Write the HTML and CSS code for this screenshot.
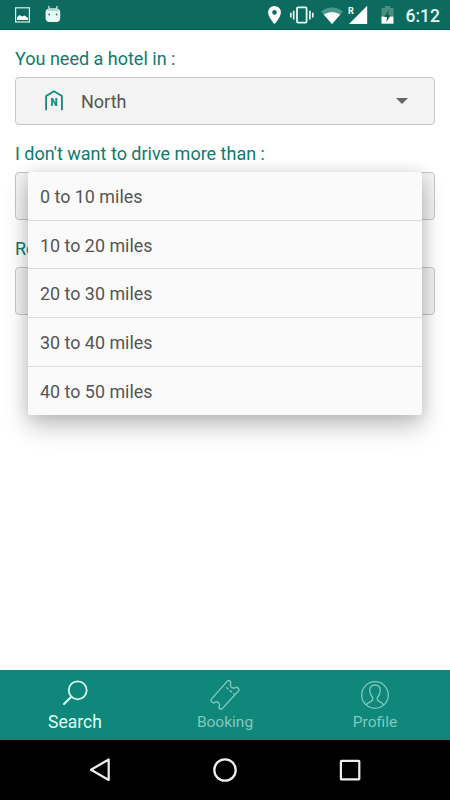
FILE: index.html
```
<!DOCTYPE html>
<html>
<head>
    <meta charset="utf-8">
    <title>Search</title>
    <link rel="stylesheet" href="styles.css">
</head>

<body>
<div class="screen">
  <header class="status-bar">
    <svg class="icon-picture" width="15" height="16" viewBox="0 0 15 16">
      <rect x="0.6" y="0.8" width="13.8" height="14.2" fill="none" stroke="#d9f3ec" stroke-width="1.2"/>
      <path d="M2 13V10.5L4.5 8L7 9.6L9.5 8.6L13 11V13Z" fill="#fff"/>
    </svg>
    <svg class="icon-android" width="16" height="18" viewBox="0 0 16 18">
      <path d="M3.5 1L4.8 4.5M12.3 1L11 4.5" stroke="#d9f3ec" stroke-width="1.1"/>
      <path d="M0.6 7.5Q0.6 3.6 4.5 3.5H11.5Q15.2 3.6 15.2 7.5V13Q15.2 17 11.5 17H4.5Q0.6 17 0.6 13Z" fill="#e6faf5"/>
      <path d="M1.3 6Q2.2 3.7 4.5 3.6H11.5Q13.8 3.7 14.5 6Z" fill="#b5d9d0"/>
      <circle cx="4.2" cy="9.5" r="0.9" fill="#2d7568"/>
      <circle cx="11.6" cy="9.5" r="0.9" fill="#2d7568"/>
    </svg>

    <div class="status-right">
      <svg class="icon-pin" width="13" height="18" viewBox="0 0 13 18">
        <path fill-rule="evenodd" d="M6.5 0A6.4 6.4 0 0 0 0.1 6.4C0.1 11 6.5 18 6.5 18S12.9 11 12.9 6.4A6.4 6.4 0 0 0 6.5 0ZM6.5 4.1A2.3 2.3 0 1 1 6.5 8.7A2.3 2.3 0 1 1 6.5 4.1Z" fill="#fff"/>
      </svg>
      <svg class="icon-vibrate" width="24" height="18" viewBox="0 0 24 18">
        <rect x="7" y="1.4" width="9.6" height="15.2" rx="1" fill="none" stroke="#e6faf5" stroke-width="1.8"/>
        <path d="M0.8 6.8V11.6M3.7 4.8V13.6M19.9 4.8V13.6M22.8 6.8V11.6" stroke="#e6faf5" stroke-width="1.7"/>
      </svg>
      <svg class="icon-wifi" width="22" height="17" viewBox="0 0 22 17">
        <path d="M0 4.6Q11 -3.8 22 4.6L11 17Z" fill="#4b978a"/>
        <path d="M2.7 7.5Q11 2.3 19.3 7.5L11 17Z" fill="#fff"/>
      </svg>
      <svg class="icon-signal" width="20" height="19" viewBox="0 0 20 19">
        <path d="M1 19L19.2 0.8V19Z" fill="#fff"/>
        <text class="roaming" x="0" y="9">R</text>
      </svg>
      <svg class="icon-battery" width="13" height="18" viewBox="0 0 13 18">
        <path d="M0.5 2H4V0H9V2H12.5V10.5H0.5Z" fill="#4b8f83"/>
        <path d="M0.5 10.5H12.5V17.7H0.5Z" fill="#fff"/>
        <path d="M7.7 4L3.2 11H6L5.5 16L9.8 9H7.2Z" fill="#0c6457"/>
      </svg>
      <span class="clock">6:12</span>
    </div>
  </header>

  <main class="form">
    <div class="label">You need a hotel in :</div>
    <div class="field">
      <svg class="icon-region" width="18" height="21" viewBox="0 0 18 21">
        <path d="M1.1 20.3V6L9 1.3L16.9 6V20.3" fill="none" stroke="#16897b" stroke-width="1.8"/>
        <text class="region-letter" x="9" y="16" text-anchor="middle">N</text>
      </svg>
      <span class="value">North</span>
      <span class="arrow"></span>
    </div>
    <div class="label">I don't want to drive more than :</div>
    <div class="field"></div>
    <div class="label">Ro</div>
    <div class="field"></div>

    <ul class="dropdown">
      <li>0 to 10 miles</li>
      <li>10 to 20 miles</li>
      <li>20 to 30 miles</li>
      <li>30 to 40 miles</li>
      <li>40 to 50 miles</li>
    </ul>
  </main>

  <nav class="tabs">
    <a class="tab active">
      <svg width="30" height="30" viewBox="0 0 30 30">
        <circle cx="17.7" cy="10.3" r="9" fill="none" stroke="#d5f8ef" stroke-width="1.8"/>
        <path d="M11.3 16.8L4 24" stroke="#d5f8ef" stroke-width="2.1" stroke-linecap="round"/>
      </svg>
      <span>Search</span>
    </a>
    <a class="tab">
      <svg width="30" height="30" viewBox="0 0 30 30">
        <g fill="none" stroke="#82c7bc" stroke-width="1.4" stroke-linejoin="round">
          <path d="M17.2 1.4Q18.7 -0.1 20 1.1Q21.2 2.3 20.5 3.7Q19.7 5.7 21.4 7.2Q23.3 8.7 25.3 7.6Q26.8 6.7 28 8Q29.7 9.6 28.4 11L12.2 28.6Q10.8 30 9.5 28.7Q8.4 27.5 9.3 26.1Q10.2 24.2 8.5 22.7Q6.9 21.2 5 22.3Q3.4 23.3 2 22Q0.2 20.4 1.6 18.9Z"/>
          <path d="M16.2 7.2L24.3 14.2" stroke-dasharray="3 1.6"/>
        </g>
      </svg>
      <span>Booking</span>
    </a>
    <a class="tab">
      <svg width="30" height="30" viewBox="0 0 30 30">
        <g fill="none" stroke="#82c7bc" stroke-width="1.3">
          <circle cx="15" cy="15" r="13.3"/>
          <path d="M6.2 25Q7 23 11 21.3Q13.2 20.4 12.7 17.7Q10 14.9 9.8 11Q9.5 5 15 5T20.2 11Q20 14.9 17.3 17.7Q16.8 20.4 19 21.3Q23 23 23.8 25"/>
        </g>
      </svg>
      <span>Profile</span>
    </a>
  </nav>

  <footer class="nav-bar">
    <svg width="24" height="26" viewBox="0 0 24 26">
      <path d="M20.7 2.5V23L3 12.8Z" fill="none" stroke="#eee" stroke-width="2.2" stroke-linejoin="round"/>
    </svg>
    <svg width="24" height="26" viewBox="0 0 24 26">
      <circle cx="12" cy="13" r="10.7" fill="none" stroke="#eee" stroke-width="2.3"/>
    </svg>
    <svg width="24" height="26" viewBox="0 0 24 26">
      <rect x="2.9" y="3.9" width="18.4" height="18.4" rx="0.6" fill="none" stroke="#eee" stroke-width="2.2"/>
    </svg>
  </footer>
</div>
</body>
</html>
```
FILE: styles.css
```
html, body {
  height: 100%;
  margin: 0;
  overflow: hidden;
}
body {
  background: #fff;
  font-family: Roboto, "Liberation Sans", sans-serif;
  font-size: 18px;
}
svg {
  display: block;
  flex: none;
}
.screen {
  display: flex;
  flex-direction: column;
  width: 450px;
  height: 800px;
}

/* status bar */
.status-bar {
  display: flex;
  align-items: center;
  box-sizing: border-box;
  height: 30px;
  padding: 0 10px 0 15px;
  background: #0c6b5e;
  border-bottom: 1px solid #075f52;
}
.icon-picture {
  margin-top: 1px;
}
.icon-android {
  margin: -2px 0 0 15px;
}
.status-right {
  display: flex;
  align-items: center;
  margin-left: auto;
}
.icon-pin, .icon-vibrate, .icon-wifi, .icon-battery {
  margin-top: 1px;
}
.icon-vibrate {
  margin-left: 9px;
}
.icon-wifi {
  margin-left: 7px;
}
.icon-signal {
  margin: -1px 0 0 5px;
}
.icon-battery {
  margin-left: 13px;
}
.roaming {
  fill: #fff;
  font-size: 9px;
  font-weight: 700;
}
.clock {
  margin: 2px 0 0 12px;
  color: #e6faf5;
  font-size: 17.5px;
  font-weight: 500;
}

/* form */
.form {
  position: relative;
  flex: 1;
  padding: 0 15px;
}
.label {
  height: 47px;
  color: #0c7c6d;
  line-height: 57px;
}
.field {
  display: flex;
  align-items: center;
  box-sizing: border-box;
  height: 48px;
  padding: 0 26px 0 29px;
  background: #f3f3f3;
  border: 1px solid #c6c6c6;
  border-radius: 4px;
}
.icon-region {
  margin-top: -1px;
}
.region-letter {
  fill: #16897b;
  font-size: 10px;
  font-weight: 900;
}
.value {
  margin-left: 18px;
  color: #555;
}
.arrow {
  margin-left: auto;
  border: 6px solid transparent;
  border-top-color: #666;
  border-bottom: 0;
}
.dropdown {
  position: absolute;
  top: 142px;
  left: 28px;
  width: 394px;
  margin: 0;
  padding: 0;
  list-style: none;
  background: #fafafa;
  border-radius: 2px;
  box-shadow: 0 12px 24px rgba(0, 0, 0, 0.23), 0 0 15px rgba(0, 0, 0, 0.12);
}
.dropdown li {
  box-sizing: border-box;
  height: 48.7px;
  padding-left: 12px;
  color: #555;
  font-size: 17.9px;
  line-height: 50px;
  border-bottom: 1px solid #dcdcdc;
}
.dropdown li:last-child {
  border-bottom: 0;
}

/* tabs */
.tabs {
  display: flex;
  height: 70px;
  background: #0f877a;
}
.tab {
  display: flex;
  flex: 1;
  flex-direction: column;
  align-items: center;
  padding-top: 10px;
  color: #82c7bc;
  font-size: 15.5px;
}
.tab span {
  line-height: 25px;
}
.active {
  color: #e0fff8;
  font-size: 17.5px;
}
.active span {
  line-height: 24px;
}

/* system buttons */
.nav-bar {
  display: flex;
  align-items: center;
  justify-content: space-between;
  height: 60px;
  padding: 0 88px;
  background: #000;
}
```
